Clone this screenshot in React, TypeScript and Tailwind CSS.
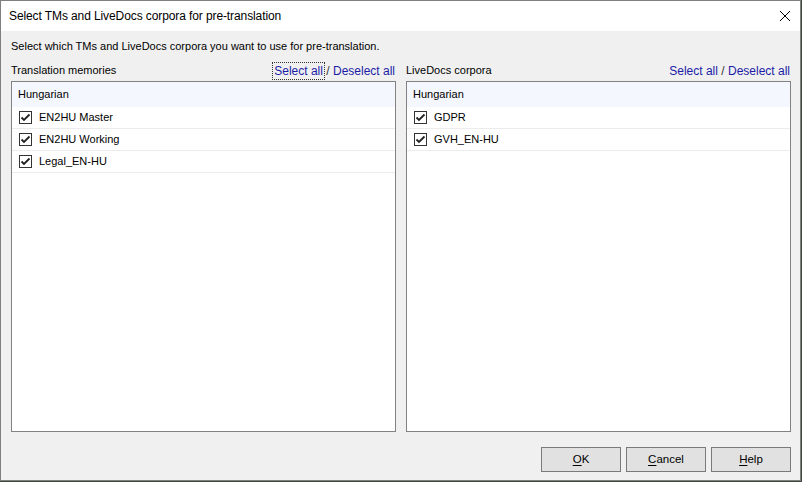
import React from "react";

const font = { fontFamily: '"Liberation Sans", Arial, sans-serif' };

function Check() {
  return (
    <div className="w-[13px] h-[13px] border border-[#333333] bg-white flex items-center justify-center shrink-0">
      <svg width="11" height="11" viewBox="0 0 11 11">
        <path d="M1.5 5.5 L4 8 L9.5 2.5" fill="none" stroke="#222222" strokeWidth="1.8" />
      </svg>
    </div>
  );
}

function ListBox({ items }: { items: string[] }) {
  return (
    <div className="w-[385px] h-[351px] border border-[#828282] bg-white flex flex-col">
      <div className="h-[25px] bg-[#f4f7fd] flex items-center pl-[6px] text-[11px] text-black">Hungarian</div>
      {items.map((t) => (
        <div key={t} className="h-[22px] border-b border-[#ececec] flex items-center pl-[7px] gap-[7px] text-[11px] text-black">
          <Check />
          <span>{t}</span>
        </div>
      ))}
    </div>
  );
}

function Btn({ u, rest }: { u: string; rest: string }) {
  return (
    <div className="w-[80px] h-[25px] border border-[#7a7a7a] bg-[#e1e1e1] flex items-center justify-center text-[11.5px] text-black">
      <span>
        <span className="underline underline-offset-2">{u}</span>
        {rest}
      </span>
    </div>
  );
}

export default function App() {
  return (
    <div className="w-[802px] h-[482px] bg-[#3c4a3c]" style={font}>
      <div className="w-[801px] h-[481px] border border-[#7f7f7f] bg-[#f0f0f0] flex flex-col">
        <div className="h-[30px] bg-white flex items-center justify-between pl-[8px] pr-[8px] shrink-0">
          <span className="text-[12px] tracking-[-0.1px] text-black">Select TMs and LiveDocs corpora for pre-translation</span>
          <svg width="12" height="12" viewBox="0 0 12 12" className="mr-[1px]">
            <path d="M1 1 L11 11 M11 1 L1 11" stroke="#000" strokeWidth="1" />
          </svg>
        </div>
        <div className="flex flex-col pl-[10px] pr-[9px]">
          <div className="h-[15px] mt-[8px] leading-[15px] text-[11px] text-black">
            Select which TMs and LiveDocs corpora you want to use for pre-translation.
          </div>
          <div className="flex gap-[10px] mt-[9px]">
            <div className="flex flex-col w-[385px]">
              <div className="h-[15px] flex items-center justify-between mb-[3px]">
                <span className="text-black text-[11px]">Translation memories</span>
                <span className="text-[#1c1ca6] text-[12px] pr-[1px]">
                  <span className="outline outline-1 outline-dotted outline-[#333] outline-offset-[1px]">Select all</span>
                  <span className="text-[#333]"> / </span>
                  <span>Deselect all</span>
                </span>
              </div>
              <ListBox items={["EN2HU Master", "EN2HU Working", "Legal_EN-HU"]} />
            </div>
            <div className="flex flex-col w-[385px]">
              <div className="h-[15px] flex items-center justify-between mb-[3px]">
                <span className="text-black text-[11px]">LiveDocs corpora</span>
                <span className="text-[#1c1ca6] text-[12px] pr-[1px]">
                  <span>Select all</span>
                  <span className="text-[#333]"> / </span>
                  <span>Deselect all</span>
                </span>
              </div>
              <ListBox items={["GDPR", "GVH_EN-HU"]} />
            </div>
          </div>
          <div className="flex justify-end gap-[5px] mt-[15px]">
            <Btn u="O" rest="K" />
            <Btn u="C" rest="ancel" />
            <Btn u="H" rest="elp" />
          </div>
        </div>
      </div>
    </div>
  );
}
